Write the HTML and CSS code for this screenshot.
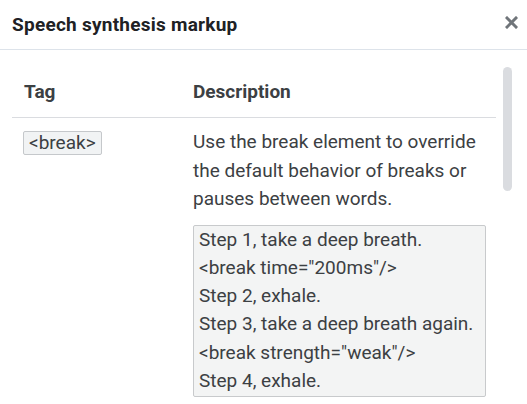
FILE: index.html
```html
<!DOCTYPE html>
<html>
<head>
<meta charset="utf-8">
<link rel="stylesheet" href="styles.css">
</head>
<body>
<div class="dialog">
  <div class="header">
    <h1 class="title">Speech synthesis markup</h1>
    <button class="close" aria-label="Close">
      <svg width="13" height="13" viewBox="0 0 13 13"><path d="M2 2 L11 11 M11 2 L2 11" stroke="#70757a" stroke-width="3" stroke-linecap="square"/></svg>
    </button>
  </div>
  <div class="content">
    <table class="table">
      <thead>
        <tr><th class="col-tag">Tag</th><th>Description</th></tr>
      </thead>
      <tbody>
        <tr>
          <td class="col-tag"><code class="tag">&lt;break&gt;</code></td>
          <td>
            <p class="desc">Use the break element to override the default behavior of breaks or pauses between words.</p>
            <pre class="example">Step 1, take a deep breath.
&lt;break time="200ms"/&gt;
Step 2, exhale.
Step 3, take a deep breath again.
&lt;break strength="weak"/&gt;
Step 4, exhale.</pre>
          </td>
        </tr>
      </tbody>
    </table>
    <div class="thumb"></div>
  </div>
</div>
</body>
</html>
```

FILE: styles.css
```css
* { box-sizing: border-box; }
html, body { margin: 0; padding: 0; background: #fff; }
body { font-family: Roboto, "Noto Sans", sans-serif; color: #3c4043; }
.dialog { width: 527px; height: 404px; overflow: hidden; }
.header {
  height: 50px;
  display: flex;
  align-items: center;
  justify-content: space-between;
  padding: 0 10px 0 12px;
  border-bottom: 1px solid #dde3ea;
}
.title { margin: 0; font-size: 19px; font-weight: 700; color: #202124; letter-spacing: 0.25px; }
.close { border: 0; background: none; padding: 0; width: 13px; height: 13px; display: flex; margin-top: -5px; margin-right: -1px; }
.content { position: relative; padding: 17px 31px 0 12px; }
.table { width: 100%; border-collapse: collapse; font-size: 19px; }
.table th {
  text-align: left;
  font-weight: 700;
  color: #3c4043;
  padding: 13px 12px 14px;
  border-bottom: 1px solid #dadce0;
  line-height: 23px;
}
.col-tag { width: 169px; }
.table td { vertical-align: top; padding: 10px 12px 0; }
.table td:last-child { padding-right: 10px; }
.tag {
  display: inline-block;
  font-family: Roboto, sans-serif;
  font-size: 19px;
  line-height: 22px;
  padding: 0 5px;
  margin-left: -1px;
  margin-top: 3px;
  background: #f1f3f4;
  border: 1px solid #c5c8cb;
  border-radius: 2px;
  color: #3c4043;
}
.desc { margin: 0; line-height: 28.6px; color: #3c4043; }
.example {
  margin: 11px 0 0 0;
  font-family: Roboto, sans-serif;
  font-size: 19px;
  line-height: 28.2px;
  padding: 0 5px;
  background: #f3f4f4;
  border: 1px solid #c8cacc;
  border-radius: 2px;
  color: #3c4043;
  white-space: pre;
  height: 172px;
}
.thumb {
  position: absolute;
  left: 503px;
  top: 17px;
  width: 9px;
  height: 124px;
  border-radius: 5px;
  background: #dadce0;
}
```
